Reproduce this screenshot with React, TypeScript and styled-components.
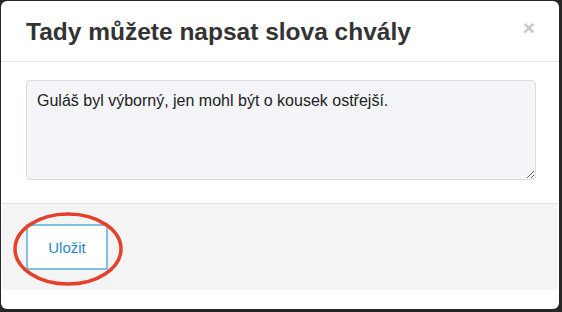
import React from 'react';
import styled, { createGlobalStyle } from 'styled-components';

const GlobalStyle = createGlobalStyle`
  html, body {
    margin: 0;
    padding: 0;
    background: #262626;
    font-family: 'Liberation Sans', Arial, sans-serif;
  }
`;

const Modal = styled.div`
  margin: 1px 3px 0 1px;
  width: 558px;
  height: 308px;
  box-sizing: border-box;
  background: #fff;
  border-radius: 6px;
  display: flex;
  flex-direction: column;
  overflow: hidden;
`;

const Header = styled.div`
  height: 61px;
  box-sizing: border-box;
  border-bottom: 1px solid #e5e5e5;
  display: flex;
  align-items: center;
  justify-content: space-between;
  padding: 0 24px 0 25px;
`;

const Title = styled.h4`
  margin: 0;
  font-size: 24.5px;
  font-weight: 700;
  color: #333;
  padding-top: 1px;
`;

const Close = styled.button`
  border: none;
  background: none;
  padding: 0;
  font-family: 'Liberation Sans', Arial, sans-serif;
  font-size: 21px;
  font-weight: 700;
  line-height: 1;
  color: #c8c8c8;
  margin-top: -7px;
`;

const Body = styled.div`
  padding: 18px 22px 23px 25px;
`;

const TextArea = styled.textarea`
  display: block;
  width: 510px;
  height: 100px;
  box-sizing: border-box;
  margin: 0;
  padding: 9px 10px;
  border: 1px solid #dcdcdc;
  border-radius: 4px;
  background: #f4f5f8;
  font-family: 'Liberation Sans', Arial, sans-serif;
  font-size: 16px;
  line-height: 22px;
  color: #222;
`;

const Footer = styled.div`
  position: relative;
  margin: 0 1px;
  height: 87px;
  box-sizing: border-box;
  background: #f4f4f4;
  border-top: 1px solid #e2e2e2;
  border-radius: 0 0 5px 5px;
  padding: 20px 24px;
  display: flex;
  align-items: flex-start;
`;

const SaveButton = styled.button`
  width: 82px;
  height: 46px;
  box-sizing: border-box;
  background: #fff;
  border: 2px solid #7dc0e0;
  border-radius: 1px;
  color: #1f87c4;
  font-family: 'Liberation Sans', Arial, sans-serif;
  font-size: 15px;
  cursor: pointer;
`;

const Highlight = styled.svg`
  position: absolute;
  left: 10px;
  top: 6px;
  pointer-events: none;
`;

export default function App() {
  return (
    <>
      <GlobalStyle />
      <Modal>
        <Header>
          <Title>Tady můžete napsat slova chvály</Title>
          <Close aria-label="Zavřít">×</Close>
        </Header>
        <Body>
          <TextArea defaultValue="Guláš byl výborný, jen mohl být o kousek ostřejší." />
        </Body>
        <Footer>
          <SaveButton>Uložit</SaveButton>
          <Highlight width="116" height="80" viewBox="0 0 116 80">
            <ellipse cx="56" cy="39" rx="53" ry="35" fill="none" stroke="#e5402b" strokeWidth="3.5" />
          </Highlight>
        </Footer>
      </Modal>
    </>
  );
}
